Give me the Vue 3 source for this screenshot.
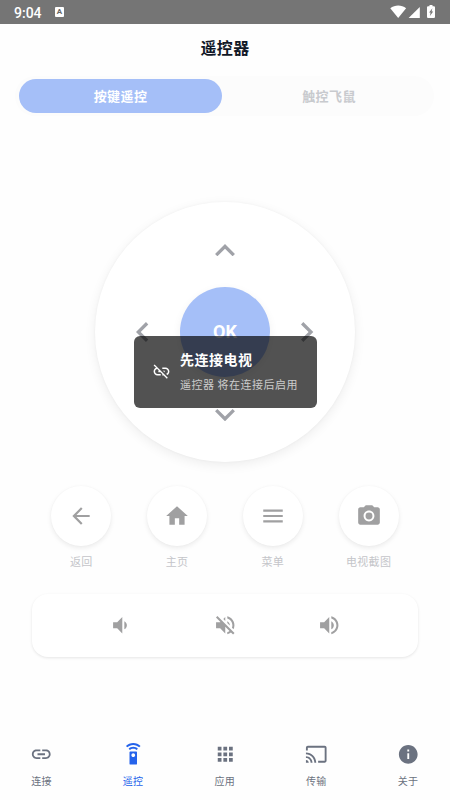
<script setup>
const actions = [
  { label: '返回', path: 'M20 11H7.83l5.59-5.59L12 4l-8 8 8 8 1.41-1.41L7.83 13H20v-2z' },
  { label: '主页', path: 'M10 20v-6h4v6h5v-8h3L12 3 2 12h3v8z' },
  { label: '菜单', path: 'M3 18h18v-2H3v2zm0-5h18v-2H3v2zm0-7v2h18V6H3z' },
  { label: '电视截图', path: 'M9 2 7.17 4H4c-1.1 0-2 .9-2 2v12c0 1.1.9 2 2 2h16c1.1 0 2-.9 2-2V6c0-1.1-.9-2-2-2h-3.17L15 2H9zm3 15c-2.76 0-5-2.24-5-5s2.24-5 5-5 5 2.24 5 5-2.24 5-5 5zM12 8.8a3.2 3.2 0 1 0 0 6.4 3.2 3.2 0 0 0 0-6.4z' }
]
const volumes = [
  'M18.5 12c0-1.77-1.02-3.29-2.5-4.03v8.05c1.48-.73 2.5-2.25 2.5-4.02zM5 9v6h4l5 5V4L9 9H5z',
  'M4.34 2.93 2.93 4.34 7.29 8.7 7 9H3v6h4l5 5v-6.59l4.18 4.18c-.65.49-1.38.88-2.18 1.11v2.06c1.34-.3 2.57-.92 3.61-1.75l2.05 2.05 1.41-1.41L4.34 2.93zM19 12c0 .82-.15 1.61-.41 2.34l1.53 1.53c.56-1.17.88-2.48.88-3.87 0-4.28-2.99-7.86-7-8.77v2.06c2.89.86 5 3.54 5 6.71zm-7-8-1.88 1.88L12 7.76zm4.5 8c0-1.77-1.02-3.29-2.5-4.03v1.79l2.48 2.48c.01-.08.02-.16.02-.24z',
  'M3 9v6h4l5 5V4L7 9H3zm13.5 3c0-1.77-1.02-3.29-2.5-4.03v8.05c1.48-.73 2.5-2.25 2.5-4.02zM14 3.23v2.06c2.89.86 5 3.54 5 6.71s-2.11 5.85-5 6.71v2.06c4.01-.91 7-4.49 7-8.77s-2.99-7.86-7-8.77z'
]
const tabs = [
  { label: '连接', path: 'M3.9 12c0-1.71 1.39-3.1 3.1-3.1h4V7H7c-2.76 0-5 2.24-5 5s2.24 5 5 5h4v-1.9H7c-1.71 0-3.1-1.39-3.1-3.1zM8 13h8v-2H8v2zm9-6h-4v1.9h4c1.71 0 3.1 1.39 3.1 3.1s-1.39 3.1-3.1 3.1h-4V17h4c2.76 0 5-2.24 5-5s-2.24-5-5-5z' },
  { label: '遥控', active: true, path: 'M15 9H9c-.55 0-1 .45-1 1v12c0 .55.45 1 1 1h6c.55 0 1-.45 1-1V10c0-.55-.45-1-1-1zm-3 6c-1.1 0-2-.9-2-2s.9-2 2-2 2 .9 2 2-.9 2-2 2zM7.05 6.05l1.41 1.41C9.37 6.56 10.62 6 12 6s2.63.56 3.54 1.46l1.41-1.41C15.68 4.78 13.93 4 12 4s-3.68.78-4.95 2.05zM12 0C8.96 0 6.21 1.23 4.22 3.22l1.41 1.41C7.26 3.01 9.51 2 12 2s4.74 1.01 6.36 2.64l1.41-1.41C17.79 1.23 15.04 0 12 0z' },
  { label: '应用', path: 'M4 8h4V4H4v4zm6 12h4v-4h-4v4zm-6 0h4v-4H4v4zm0-6h4v-4H4v4zm6 0h4v-4h-4v4zm6-10v4h4V4h-4zm-6 4h4V4h-4v4zm6 6h4v-4h-4v4zm0 6h4v-4h-4v4z' },
  { label: '传输', path: 'M21 3H3c-1.1 0-2 .9-2 2v3h2V5h18v14h-7v2h7c1.1 0 2-.9 2-2V5c0-1.1-.9-2-2-2zM1 18v3h3c0-1.66-1.34-3-3-3zm0-4v2c2.76 0 5 2.24 5 5h2c0-3.87-3.13-7-7-7zm0-4v2c4.97 0 9 4.03 9 9h2c0-6.08-4.93-11-11-11z' },
  { label: '关于', path: 'M12 2C6.48 2 2 6.48 2 12s4.48 10 10 10 10-4.48 10-10S17.52 2 12 2zm1 15h-2v-6h2v6zm0-8h-2V7h2v2z' }
]
</script>

<template>
  <div class="screen">
    <div class="status">
      <span class="time">9:04</span>
      <span class="badge">A</span>
      <svg class="sys" width="48" height="16" viewBox="0 0 48 16">
        <path d="M.3 4.2C4.8.6 11.6.6 16.1 4.2L8.2 14z" />
        <path d="M29.8 3v11H18.6z" />
        <path fill-rule="evenodd" d="M39.5 1h3v1.3h1.2c.7 0 1.3.5 1.3 1.2v9.2c0 .7-.6 1.3-1.3 1.3h-5.4c-.7 0-1.3-.6-1.3-1.3V3.500c0-.7.6-1.200 1.300-1.200h1.200zM42.400 4.300 39.100 8.600h1.500l-.7 3.500 3.300-4.600h-1.600z" />
      </svg>
    </div>
    <h1 class="title">遥控器</h1>
    <div class="segment">
      <div class="seg on">按键遥控</div>
      <div class="seg">触控飞鼠</div>
    </div>

    <div class="pad">
      <svg class="chev up" viewBox="6 8 12 7.41"><path d="M12 8l-6 6 1.41 1.41L12 10.83l4.59 4.58L18 14z" /></svg>
      <svg class="chev left" viewBox="8 6 7.41 12"><path d="M15.41 7.41 14 6l-6 6 6 6 1.41-1.41L10.83 12z" /></svg>
      <div class="ok">OK</div>
      <svg class="chev right" viewBox="8.59 6 7.41 12"><path d="M10 6 8.59 7.41 13.17 12l-4.58 4.59L10 18l6-6z" /></svg>
      <svg class="chev down" viewBox="6 8.59 12 7.41"><path d="M16.59 8.59 12 13.17 7.41 8.59 6 10l6 6 6-6z" /></svg>
      <div class="toast">
        <svg width="19" height="19" viewBox="0 0 24 24"><path d="M17 7h-4v1.9h4c1.71 0 3.1 1.39 3.1 3.1 0 1.43-.98 2.63-2.31 2.98l1.46 1.46C20.88 15.61 22 13.95 22 12c0-2.76-2.24-5-5-5zm-1 4h-2.19l2 2H16zM2 4.27l3.11 3.11C3.29 8.12 2 9.91 2 12c0 2.76 2.24 5 5 5h4v-1.9H7c-1.71 0-3.1-1.39-3.1-3.1 0-1.59 1.21-2.9 2.76-3.07L8.73 11H8v2h2.73L13 15.27V17h1.73l4.01 4L20 19.74 3.27 3 2 4.27z" /></svg>
        <div>
          <div class="toast-title">先连接电视</div>
          <div class="toast-text">遥控器 将在连接后启用</div>
        </div>
      </div>
    </div>

    <div class="actions">
      <div v-for="a in actions" :key="a.label" class="action">
        <div class="round"><svg width="26" height="26" viewBox="0 0 24 24"><path :d="a.path" /></svg></div>
        <span>{{ a.label }}</span>
      </div>
    </div>

    <div class="volume">
      <svg v-for="v in volumes" :key="v" width="24.5" height="24.5" viewBox="0 0 24 24"><path :d="v" /></svg>
    </div>

    <nav class="nav">
      <div v-for="t in tabs" :key="t.label" class="tab" :class="{ current: t.active }">
        <svg width="22.5" height="22.5" viewBox="0 0 24 24"><path :d="t.path" /></svg>
        <span>{{ t.label }}</span>
      </div>
    </nav>
  </div>
</template>

<style>
body { background: #fefefe; }
</style>

<style scoped>
.screen {
  width: 450px;
  height: 800px;
  display: flex;
  flex-direction: column;
  overflow: hidden;
  background: #fefefe;
  font-family: "Noto Sans CJK SC", sans-serif;
}
svg { fill: currentColor; display: block; flex: none; }
.status {
  flex: none;
  height: 24px;
  background: #757575;
  color: #fff;
  display: flex;
  align-items: center;
  padding: 0 12px 0 14px;
  box-sizing: border-box;
}
.time { width: 28px; font: 500 14px/24px Roboto, sans-serif; padding-top: 1px; }
.badge {
  margin-left: 13px;
  width: 9px;
  height: 10px;
  border-radius: 1px;
  background: #fff;
  color: #666;
  font: 700 8px/10px Roboto, sans-serif;
  text-align: center;
}
.sys { margin-left: auto; }
.title {
  flex: none;
  margin: 0;
  height: 48px;
  line-height: 47px;
  text-align: center;
  font-size: 16px;
  letter-spacing: 0.4px;
  font-weight: 700;
  color: #111827;
}
.segment {
  flex: none;
  display: flex;
  box-sizing: border-box;
  height: 40px;
  margin: 4px 16px 0 15px;
  padding: 3px 4px;
  border-radius: 20px;
  background: #fcfcfc;
}
.seg {
  flex: none;
  box-sizing: border-box;
  width: 203px;
  height: 34px;
  line-height: 33px;
  border-radius: 17px;
  text-align: center;
  font-size: 13px;
  letter-spacing: 0.4px;
  font-weight: 700;
  color: #c8cace;
  padding-left: 11px;
}
.seg.on { background: #a5bff8; color: #fff; padding-left: 0; }
.pad {
  flex: none;
  position: relative;
  align-self: center;
  width: 260px;
  height: 260px;
  margin-top: 86.4px;
  border-radius: 50%;
  background: #fff;
  box-shadow: 0 3px 12px rgba(0, 0, 0, 0.07), 0 0 3px rgba(0, 0, 0, 0.04);
  color: #a0a2a8;
  display: grid;
  grid-template: 85px 90px 85px / 85px 90px 85px;
  place-items: center;
}
.chev.up, .chev.down { width: 20px; height: 12.3px; grid-column: 2; }
.chev.left, .chev.right { width: 12.3px; height: 20px; grid-row: 2; }
.chev.up { grid-row: 1; margin-top: 10px; }
.chev.down { grid-row: 3; margin-bottom: 10px; }
.chev.left { grid-column: 1; margin-left: 10px; }
.chev.right { grid-column: 3; margin-right: 10px; }
.ok {
  grid-area: 2 / 2;
  width: 90px;
  height: 90px;
  border-radius: 50%;
  background: #a5bff8;
  color: #fff;
  text-align: center;
  font: 700 18px/90px Roboto, sans-serif;
  box-shadow: 0 3px 10px rgba(0, 0, 0, 0.06);
}
.toast {
  position: absolute;
  left: 39px;
  top: 133.6px;
  width: 182.5px;
  height: 72px;
  box-sizing: border-box;
  padding: 0 0 0 17.5px;
  border-radius: 6px;
  background: rgba(0, 0, 0, 0.68);
  color: #fff;
  display: flex;
  align-items: center;
  gap: 9.5px;
  white-space: nowrap;
}
.toast-title { font-size: 14px; letter-spacing: 0.5px; line-height: 24px; font-weight: 700; margin-top: -1px; }
.toast-text { font-size: 11px; letter-spacing: 0.5px; line-height: 24px; margin-top: 1px; color: #ccc; }
.actions { flex: none; display: flex; justify-content: space-between; padding: 24px 33.5px 0; }
.action { width: 96px; display: flex; flex-direction: column; align-items: center; color: #c4c5c9; font-size: 11px; letter-spacing: 0.3px; line-height: 16px; gap: 7px; }
.round {
  width: 60px;
  height: 60px;
  border-radius: 50%;
  background: #fff;
  color: #a0a0a1;
  display: grid;
  place-items: center;
  box-shadow: 0 2px 5px rgba(0, 0, 0, 0.08), 0 0 2px rgba(0, 0, 0, 0.03);
}
.volume {
  flex: none;
  height: 63px;
  margin: 24.6px 32px 0;
  padding: 0 36px;
  border-radius: 16px;
  background: #fff;
  color: #a0a0a1;
  display: grid;
  grid-template-columns: repeat(3, 1fr);
  place-items: center;
  box-shadow: 0 1px 3px rgba(0, 0, 0, 0.1);
}
.nav { margin-top: auto; flex: none; height: 72px; display: flex; justify-content: space-between; padding: 0 10.5px 0 10px; }
.tab { width: 63px; display: flex; flex-direction: column; align-items: center; gap: 7px; padding-top: 15px; color: #6b7280; font-size: 10px; letter-spacing: 0.3px; line-height: 15px; }
.current { color: #2563eb; }
</style>
